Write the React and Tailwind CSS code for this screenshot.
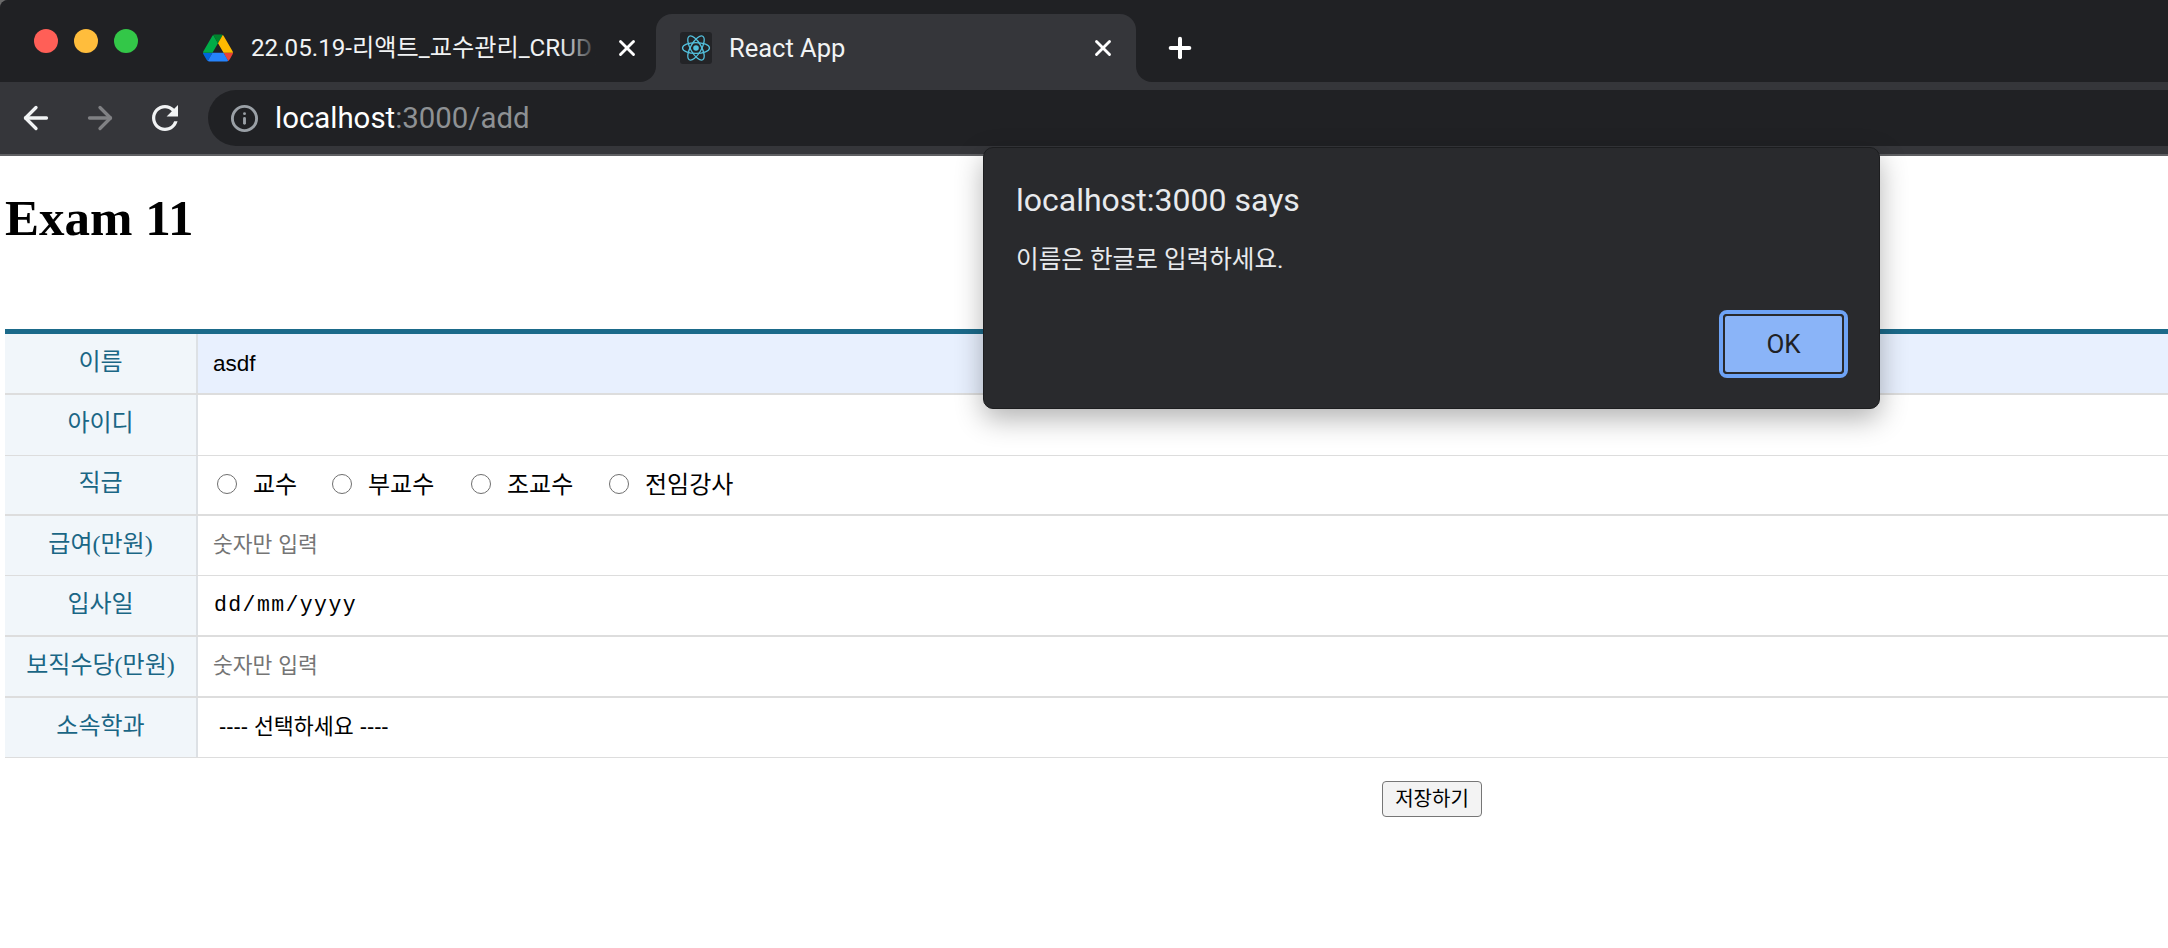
import React from "react";
import { ArrowLeft, ArrowRight, Info, X, Plus } from "lucide-react";

const UI = { fontFamily: 'Roboto, "Noto Sans CJK KR", sans-serif' };
const SERIF = { fontFamily: '"Liberation Serif", "Noto Sans CJK KR", serif' };
const SANS = { fontFamily: '"Liberation Sans", "Noto Sans CJK KR", sans-serif' };

function Drive() {
  return (
    <svg viewBox="0 0 87.3 78" className="w-[30px] h-[28px] shrink-0">
      <path d="m6.6 66.85 3.85 6.65c.8 1.4 1.95 2.5 3.3 3.3l13.75-23.8h-27.5c0 1.55.4 3.1 1.2 4.5z" fill="#0066da" />
      <path d="m43.65 25-13.75-23.8c-1.35.8-2.5 1.9-3.3 3.3l-25.4 44a9.06 9.06 0 0 0 -1.2 4.5h27.5z" fill="#00ac47" />
      <path d="m73.55 76.8c1.35-.8 2.5-1.9 3.3-3.3l1.6-2.75 7.65-13.25c.8-1.4 1.2-2.95 1.2-4.5h-27.502l5.852 11.5z" fill="#ea4335" />
      <path d="m43.65 25 13.75-23.8c-1.35-.8-2.9-1.2-4.5-1.2h-18.5c-1.6 0-3.15.45-4.5 1.2z" fill="#00832d" />
      <path d="m59.8 53h-32.3l-13.75 23.8c1.35.8 2.9 1.2 4.5 1.2h50.8c1.6 0 3.15-.45 4.5-1.2z" fill="#2684fc" />
      <path d="m73.4 26.5-12.7-22c-.8-1.4-1.95-2.5-3.3-3.3l-13.75 23.8 16.15 28h27.45c0-1.55-.4-3.1-1.2-4.5z" fill="#ffba00" />
    </svg>
  );
}

function ReactLogo() {
  return (
    <div className="w-[32px] h-[32px] rounded-[3px] bg-[#232427] flex items-center justify-center shrink-0">
      <svg viewBox="0 0 32 32" className="w-[32px] h-[32px]" fill="none" stroke="#53c1de" strokeWidth="1.3">
        <ellipse cx="16" cy="16" rx="13.5" ry="5.4" />
        <ellipse cx="16" cy="16" rx="13.5" ry="5.4" transform="rotate(60 16 16)" />
        <ellipse cx="16" cy="16" rx="13.5" ry="5.4" transform="rotate(120 16 16)" />
        <circle cx="16" cy="16" r="2.8" fill="#53c1de" stroke="none" />
      </svg>
    </div>
  );
}

function Reload() {
  return (
    <svg viewBox="4 4 16 16" className="w-[26px] h-[26px]" fill="#f1f3f4">
      <path d="M17.65 6.35A7.958 7.958 0 0 0 12 4c-4.42 0-7.99 3.58-7.99 8s3.57 8 7.99 8c3.73 0 6.84-2.55 7.73-6h-2.08A5.99 5.99 0 0 1 12 18c-3.31 0-6-2.69-6-6s2.69-6 6-6c1.66 0 3.14.69 4.22 1.78L13 11h7V4l-2.35 2.35z" />
    </svg>
  );
}

function Radio({ label, className }) {
  return (
    <span className={`flex items-center ${className}`}>
      <span className="w-[20px] h-[20px] rounded-full border border-[#6f6f6f] bg-white shrink-0 -translate-y-[1px]" />
      <span className="ml-[16px] text-[24px] text-black" style={SERIF}>{label}</span>
    </span>
  );
}

const rows = [
  { label: "이름", h: "h-[61px] border-b-2", bg: "bg-[#e8f0fe]", content: <span className="ml-[15px] text-[22.5px] text-black" style={SANS}>asdf</span> },
  { label: "아이디", h: "h-[61px] border-b", bg: "bg-white", content: null },
  {
    label: "직급", h: "h-[60px] border-b-2", bg: "bg-white",
    content: (
      <div className="flex items-center ml-[19px]">
        <Radio label="교수" className="w-[115px]" />
        <Radio label="부교수" className="w-[139px]" />
        <Radio label="조교수" className="w-[138px]" />
        <Radio label="전임강사" />
      </div>
    ),
  },
  { label: "급여(만원)", h: "h-[60px] border-b", bg: "bg-white", content: <span className="ml-[15px] text-[21.5px] text-[#757575]" style={SANS}>숫자만 입력</span> },
  { label: "입사일", h: "h-[61px] border-b-2", bg: "bg-white", content: <span className="ml-[16px] text-[21.5px] tracking-[1.4px] text-black" style={{ fontFamily: '"Liberation Mono", monospace' }}>dd/mm/yyyy</span> },
  { label: "보직수당(만원)", h: "h-[61px] border-b-2", bg: "bg-white", content: <span className="ml-[15px] text-[21.5px] text-[#757575]" style={SANS}>숫자만 입력</span> },
  { label: "소속학과", h: "h-[60px] border-b", bg: "bg-white", content: <span className="ml-[21px] text-[21.7px] text-black" style={SANS}>---- 선택하세요 ----</span> },
];

export default function App() {
  return (
    <div className="relative w-[2168px] h-[948px] overflow-hidden bg-white">
      <header className="bg-[#6a6a6a]" style={UI}>
        <div className="flex h-[82px] bg-[#35363a] rounded-tl-[8px]">
          <div className="w-[656px] h-full flex items-center bg-[#202124] rounded-tl-[8px] rounded-br-[16px] shrink-0">
            <div className="flex items-center gap-[16px] ml-[34px]">
              <span className="w-[24px] h-[24px] rounded-full bg-[#ff5f57]" />
              <span className="w-[24px] h-[24px] rounded-full bg-[#ffbd3c]" />
              <span className="w-[24px] h-[24px] rounded-full bg-[#33c748]" />
            </div>
            <div className="self-end h-[68px] flex items-center ml-[65px]">
              <Drive />
              <div className="relative ml-[18px] w-[349px] overflow-hidden whitespace-nowrap text-[24.2px] text-[#f1f3f4]">
                22.05.19-리액트_교수관리_CRUD
                <span className="absolute right-0 top-0 bottom-0 w-[40px] bg-gradient-to-r from-transparent to-[#202124]" />
              </div>
              <X size={26} strokeWidth={2.6} className="ml-[14px] text-white shrink-0" />
            </div>
          </div>
          <div className="w-[480px] h-full bg-[#202124] shrink-0 flex items-end">
            <div className="w-full h-[68px] bg-[#35363a] rounded-t-[16px] flex items-center pl-[24px] pr-[20px]">
              <ReactLogo />
              <span className="ml-[17px] text-[25.5px] text-[#f1f3f4] flex-1">React App</span>
              <X size={26} strokeWidth={2.6} className="text-white" />
            </div>
          </div>
          <div className="flex-1 h-full bg-[#202124] rounded-bl-[16px] flex items-end">
            <div className="h-[68px] flex items-center ml-[28px]">
              <Plus size={32} strokeWidth={3} className="text-white" />
            </div>
          </div>
        </div>
        <div className="flex items-center h-[74px] pt-[8px] pb-[8px] bg-[#35363a] border-b-2 border-[#5f6063]">
          <ArrowLeft size={36} strokeWidth={2.2} className="ml-[18px] text-[#f1f3f4] shrink-0" />
          <ArrowRight size={36} strokeWidth={2.2} className="ml-[28px] text-[#808184] shrink-0" />
          <div className="ml-[34px] shrink-0"><Reload /></div>
          <div className="ml-[30px] flex-1 h-[56px] rounded-l-full bg-[#202124] flex items-center pl-[22px]">
            <Info size={29} strokeWidth={2.4} className="text-[#9aa0a6]" />
            <span className="ml-[16px] text-[29.4px] text-white">localhost<span className="text-[#8e9194]">:3000/add</span></span>
          </div>
        </div>
      </header>

      <main className="pl-[5px]">
        <h1 className="mt-[33px] text-[51px] leading-[58px] font-bold text-black" style={SERIF}>Exam 11</h1>
        <div className="mt-[82px] border-t-[5px] border-[#1b6a8a]">
          {rows.map((r) => (
            <div key={r.label} className={`flex items-stretch border-[#dddddd] box-border ${r.h} ${r.bg}`}>
              <div className="w-[193px] shrink-0 bg-[#f1f6fa] border-r-2 border-[#dde1e5] flex items-center justify-center pb-[4px] text-[24px] text-[#1a6685] whitespace-nowrap" style={SERIF}>
                {r.label}
              </div>
              <div className="flex-1 flex items-center">{r.content}</div>
            </div>
          ))}
        </div>
        <button className="block mt-[23px] ml-[1377px] w-[100px] h-[36px] rounded-[4px] bg-[#f3f3f3] border border-[#767676] text-[20px] text-black" style={SANS}>저장하기</button>
      </main>

      <div className="absolute left-[983px] top-[147px] w-[897px] h-[262px] rounded-[10px] bg-[#292a2d] border border-[#1c1d1f] shadow-[0_10px_28px_rgba(0,0,0,0.3)] px-[32px] pt-[32px]" style={UI}>
        <div className="text-[32px] leading-[40px] text-[#e8eaed]">localhost:3000 says</div>
        <div className="mt-[22px] text-[24.6px] leading-[36px] text-[#e8eaed]">이름은 한글로 입력하세요.</div>
        <div className="flex justify-end -mr-[1px] mt-[32px]">
          <div className="w-[129px] h-[68px] rounded-[8px] border-[4px] border-[#6ea3f6]">
            <div className="w-full h-full rounded-[4px] bg-[#8ab4f8] border-[2px] border-[#292a2d] flex items-center justify-center text-[26px] font-normal text-[#202124]">OK</div>
          </div>
        </div>
      </div>
    </div>
  );
}
